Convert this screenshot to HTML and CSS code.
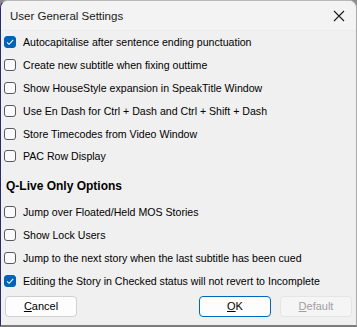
FILE: index.html
```html
<!DOCTYPE html>
<html>
<head>
<meta charset="utf-8">
<link rel="stylesheet" href="styles.css">
</head>
<body>
<div class="window">
  <div class="titlebar">
    <span class="title">User General Settings</span>
    <svg class="close" width="12" height="12" viewBox="0 0 12 12"><path d="M1 1 L11 11 M11 1 L1 11" stroke="#1a1a1a" stroke-width="1.1"/></svg>
  </div>
  <div class="content">
    <div class="options">
      <label class="row"><span class="box checked"><svg width="12" height="12" viewBox="0 0 12 12"><path d="M3 6.3 L5.1 8.3 L9.2 3.9" fill="none" stroke="#fff" stroke-width="1.1"/></svg></span>Autocapitalise after sentence ending punctuation</label>
      <label class="row"><span class="box"></span>Create new subtitle when fixing outtime</label>
      <label class="row"><span class="box"></span>Show HouseStyle expansion in SpeakTitle Window</label>
      <label class="row"><span class="box"></span>Use En Dash for Ctrl + Dash and Ctrl + Shift + Dash</label>
      <label class="row"><span class="box"></span>Store Timecodes from Video Window</label>
      <label class="row"><span class="box"></span>PAC Row Display</label>
    </div>
    <div class="heading">Q-Live Only Options</div>
    <div class="options">
      <label class="row"><span class="box"></span>Jump over Floated/Held MOS Stories</label>
      <label class="row"><span class="box"></span>Show Lock Users</label>
      <label class="row"><span class="box"></span>Jump to the next story when the last subtitle has been cued</label>
      <label class="row"><span class="box checked"><svg width="12" height="12" viewBox="0 0 12 12"><path d="M3 6.3 L5.1 8.3 L9.2 3.9" fill="none" stroke="#fff" stroke-width="1.1"/></svg></span>Editing the Story in Checked status will not revert to Incomplete</label>
    </div>
    <div class="buttons">
      <button class="btn"><u>C</u>ancel</button>
      <span class="spacer"></span>
      <button class="btn primary"><u>O</u>K</button>
      <button class="btn disabled"><u>D</u>efault</button>
    </div>
  </div>
</div>
</body>
</html>
```

FILE: styles.css
```css
html, body {
  margin: 0;
  padding: 0;
  background: #8c8c8c;
  width: 357px;
  height: 327px;
  overflow: hidden;
}
.window {
  box-sizing: border-box;
  width: 357px;
  height: 327px;
  background: #f0f0f0;
  border-left: 1px solid #2b2a6e;
  border-right: 1px solid #a8a8a8;
  border-bottom: 2px solid #7c7c7c;
  border-top: 1px solid #b8b8b8;
  border-radius: 8px 8px 0 0;
  overflow: hidden;
  display: flex;
  flex-direction: column;
  font-family: "Liberation Sans", Arial, sans-serif;
  font-size: 10.6px;
  color: #000;
}
.titlebar {
  height: 29px;
  background: #f3f3f3;
  display: flex;
  align-items: center;
  padding: 0 11px 0 9px;
  border-bottom: 1px solid #ebebeb;
}
.title {
  font-family: "Liberation Sans", Arial, sans-serif;
  font-size: 11.5px;
  color: #1a1a1a;
  flex: 1;
  padding-top: 1px;
}
.close {
  display: block;
  margin-top: 1px;
}
.content {
  flex: 1;
  display: flex;
  flex-direction: column;
  padding: 0 4px 0 3px;
}
.options {
  display: flex;
  flex-direction: column;
}
.row {
  height: 22.8px;
  display: flex;
  align-items: center;
  white-space: nowrap;
}
.box {
  box-sizing: border-box;
  width: 12px;
  height: 12px;
  border: 1px solid #5a5a5a;
  border-radius: 3px;
  background: #fbfbfb;
  margin-right: 7px;
  flex: none;
  display: block;
}
.box.checked {
  background: #0063b8;
  border-color: #0063b8;
}
.box.checked svg {
  display: block;
  margin: -1px;
}
.heading {
  font-weight: bold;
  font-size: 12px;
  height: 33px;
  display: flex;
  align-items: center;
  padding-left: 2px;
  padding-top: 3px;
  box-sizing: border-box;
}
.buttons {
  display: flex;
  margin-top: 4px;
  padding-left: 1px;
}
.spacer { flex: 1; }
.btn {
  box-sizing: border-box;
  width: 72px;
  height: 21px;
  background: #fdfdfd;
  border: 1px solid #d0d0d0;
  border-radius: 4px;
  font-family: "Liberation Sans", Arial, sans-serif;
  font-size: 11px;
  color: #000;
  padding: 0;
}
.btn.primary {
  border-color: #0067c0;
  margin-right: 9px;
}
.btn.disabled {
  background: #f5f5f5;
  border-color: #e5e5e5;
  color: #a0a0a0;
}
```
